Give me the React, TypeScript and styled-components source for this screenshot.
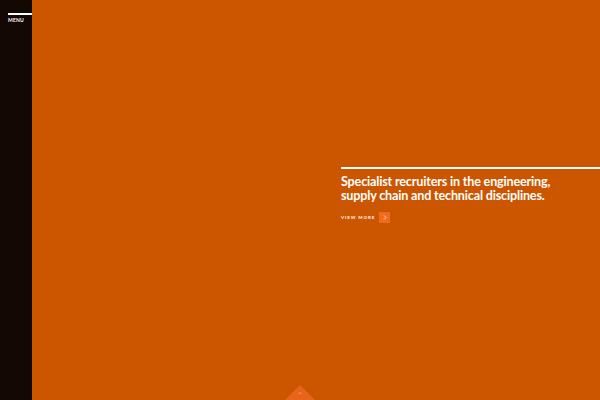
import React from "react";
import styled, { createGlobalStyle } from "styled-components";

const Global = createGlobalStyle`
  html, body { margin: 0; padding: 0; height: 100%; }
  body { font-family: "Lato", "Liberation Sans", sans-serif; background: #cc5500; }
  #root { height: 100%; }
`;

const Page = styled.div`
  display: flex;
  width: 600px;
  height: 400px;
  overflow: hidden;
  position: relative;
  background: #cc5500;
`;

const Sidebar = styled.aside`
  width: 32px;
  flex: 0 0 32px;
  background: #140804;
  display: flex;
  flex-direction: column;
  padding-top: 13px;
  box-sizing: border-box;
`;

const MenuButton = styled.div`
  display: flex;
  flex-direction: column;
  gap: 3px;
  padding-left: 8px;
  color: #fff;
`;

const MenuLine = styled.div`
  height: 2px;
  background: #fff;
  width: 24px;
`;

const MenuLabel = styled.span`
  font-size: 5px;
  font-weight: 700;
  letter-spacing: 0.2px;
  line-height: 5px;
`;

const Main = styled.main`
  flex: 1;
  display: flex;
  flex-direction: column;
  align-items: flex-end;
  padding-top: 167px;
  position: relative;
`;

const Hero = styled.section`
  width: 259px;
  display: flex;
  flex-direction: column;
`;

const Rule = styled.div`
  height: 2px;
  background: #fff;
  width: 100%;
`;

const Heading = styled.h1`
  margin: 6px 0 0;
  color: #fff;
  font-family: "Lato", "Liberation Sans", sans-serif;
  font-weight: 700;
  font-size: 12.6px;
  letter-spacing: -0.18px;
  line-height: 14px;
`;

const MoreRow = styled.div`
  display: flex;
  align-items: center;
  gap: 4px;
  margin-top: 9px;
`;

const MoreText = styled.span`
  color: #fff;
  font-size: 4.5px;
  font-weight: 700;
  letter-spacing: 0.9px;
`;

const MoreButton = styled.span`
  width: 11px;
  height: 11px;
  background: #f26a1b;
  display: flex;
  align-items: center;
  justify-content: center;
`;

const DownTab = styled.div`
  position: absolute;
  left: 253px;
  bottom: 0;
  width: 30px;
  height: 15px;
  display: flex;
  justify-content: center;
`;

export default function App() {
  return (
    <>
      <Global />
      <Page>
        <Sidebar>
          <MenuButton>
            <MenuLine />
            <MenuLabel>MENU</MenuLabel>
          </MenuButton>
        </Sidebar>
        <Main>
          <Hero>
            <Rule />
            <Heading>
              Specialist recruiters in the engineering,
              <br />
              supply chain and technical disciplines.
            </Heading>
            <MoreRow>
              <MoreText>VIEW MORE</MoreText>
              <MoreButton>
                <svg width="4" height="5" viewBox="0 0 4 5">
                  <path d="M1 0.5 L3 2.5 L1 4.5" stroke="#fff" strokeWidth="0.8" fill="none" />
                </svg>
              </MoreButton>
            </MoreRow>
          </Hero>
          <DownTab>
            <svg width="30" height="15" viewBox="0 0 30 15">
              <polygon points="15,0 30,15 0,15" fill="#e8641a" />
              <path d="M13.5 9 L15 7.5 L16.5 9" stroke="#f7a06a" strokeWidth="0.9" fill="none" />
            </svg>
          </DownTab>
        </Main>
      </Page>
    </>
  );
}
